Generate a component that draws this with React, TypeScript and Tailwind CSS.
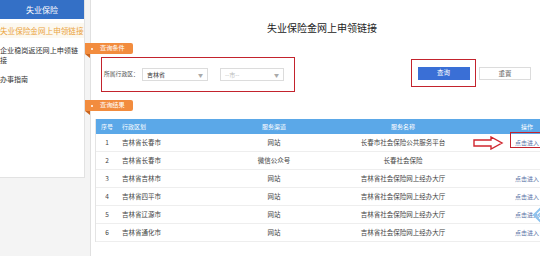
import React from 'react';

const rows = [
  { no: '1', area: '吉林省长春市', ch: '网站', name: '长春市社会保险公共服务平台', link: true },
  { no: '2', area: '吉林省长春市', ch: '微信公众号', name: '长春社会保险', link: false },
  { no: '3', area: '吉林省吉林市', ch: '网站', name: '吉林省社会保险网上经办大厅', link: true },
  { no: '4', area: '吉林省四平市', ch: '网站', name: '吉林省社会保险网上经办大厅', link: true },
  { no: '5', area: '吉林省辽源市', ch: '网站', name: '吉林省社会保险网上经办大厅', link: true },
  { no: '6', area: '吉林省通化市', ch: '网站', name: '吉林省社会保险网上经办大厅', link: true },
];

const Tag: React.FC<{ label: string }> = ({ label }) => (
  <div className="relative -ml-[6px] flex h-[11px] w-[48px] items-center rounded-r-[2px] bg-[#f28c3e]">
    <span className="ml-[6px] h-[2px] w-[2px] rounded-full bg-white" />
    <span className="ml-[7px] text-[6.2px] leading-none text-white">{label}</span>
    <span className="absolute left-0 top-full h-0 w-0 border-l-[5px] border-t-[4px] border-l-transparent border-t-[#c8651f]" />
  </div>
);

const App: React.FC = () => {
  return (
    <div
      className="flex h-[256px] w-[553px] overflow-hidden bg-[#f4f4f4] text-[#333]"
      style={{ fontFamily: '"Noto Sans CJK SC", "Noto Sans", sans-serif' }}
    >
      {/* Sidebar */}
      <div className="w-[85px] shrink-0">
        <div className="h-[178px] overflow-hidden border-b border-r border-[#e2e2e2] bg-white">
          <div className="flex h-[19px] items-center justify-center bg-[#3470c6] text-[8px] text-white">失业保险</div>
          <div className="mt-[4px] flex h-[15px] items-center bg-[#fcf8ef]">
            <span className="whitespace-nowrap text-[7.6px] leading-none text-[#eba43f]">失业保险金网上申领链接</span>
          </div>
          <div className="mt-[7px] text-[7.1px] leading-[10px] text-[#333]">
            企业稳岗返还网上申领链
            <br />
            接
          </div>
          <div className="mt-[9px] text-[7px] leading-[10px] text-[#333]">办事指南</div>
        </div>
      </div>

      {/* Main */}
      <div className="relative ml-[5px] flex-1 border-l border-[#e0e0e0] bg-white">
        <div className="pt-[22px] text-center text-[10px] leading-[12px] text-[#222]">失业保险金网上申领链接</div>

        <div className="mt-[9px]">
          <Tag label="查询条件" />
        </div>

        <div className="mt-[3px] flex items-start">
          <div className="ml-[10px] flex h-[35px] w-[194px] items-center border-[1.5px] border-[#c3232d] pl-[2px]">
            <span className="w-[38px] text-[5.8px] text-[#555]">所属行政区：</span>
            <div className="flex h-[13px] w-[66px] items-center justify-between border border-[#dcdcdc] px-[4px] text-[6px]">
              <span className="text-[#333]">吉林省</span>
              <span className="text-[5px] text-[#aaa]">▼</span>
            </div>
            <div className="ml-[12px] flex h-[13px] w-[64px] items-center justify-between border border-[#dcdcdc] px-[4px] text-[6px]">
              <span className="text-[#bbb]">--市--</span>
              <span className="text-[5px] text-[#aaa]">▼</span>
            </div>
          </div>
          <div className="ml-[116px] mt-[2px] flex h-[28px] w-[65px] items-center justify-center border-[1.5px] border-[#c3232d]">
            <div className="flex h-[13px] w-[52px] items-center justify-center bg-[#3a6fd6] text-[6.5px] text-white">查询</div>
          </div>
          <div className="ml-[3px] mt-[10px] flex h-[13px] w-[52px] items-center justify-center border border-[#dcdcdc] text-[6.5px] text-[#666]">重置</div>
        </div>

        <div className="mt-[8px]">
          <Tag label="查询结果" />
        </div>

        {/* Table */}
        <div className="ml-[4px] mt-[8px] w-[445px] border-l border-[#e4e4e4] text-[6.5px]">
          <div className="grid h-[15px] grid-cols-[22px_100px_112px_146px_65px] items-center bg-[#5ba8e8] text-[6px] text-white">
            <span className="text-center">序号</span>
            <span className="pl-[4px]">行政区划</span>
            <span className="text-center">服务渠道</span>
            <span className="text-center">服务名称</span>
            <span className="pl-[37px] text-center">操作</span>
          </div>
          {rows.map((r) => (
            <div
              key={r.no}
              className="grid h-[18px] grid-cols-[22px_100px_112px_146px_65px] items-center border-b border-[#eeeeee] text-[#444]"
            >
              <span className="text-center">{r.no}</span>
              <span className="pl-[4px]">{r.area}</span>
              <span className="text-center">{r.ch}</span>
              <span className="text-center">{r.name}</span>
              <span className="pl-[37px] text-center text-[6px] text-[#5a73a6]">{r.link ? '点击进入' : ''}</span>
            </div>
          ))}
        </div>

        {/* Annotations */}
        <svg className="absolute left-[382px] top-[136px]" width="31" height="14" viewBox="0 0 31 14">
          <path d="M1 4 H18 V1 L29 7 L18 13 V10 H1 Z" fill="none" stroke="#d0262e" strokeWidth="1.4" strokeLinejoin="miter" />
        </svg>
        <div className="absolute left-[419px] top-[132px] h-[16px] w-[32px] border-[1.5px] border-[#c3232d]" />
        <svg className="absolute left-[441px] top-[207px]" width="11" height="16" viewBox="0 0 11 16">
          <path d="M9 1 L2 8 L9 15" fill="none" stroke="#8cc3ef" strokeWidth="2" />
          <path d="M11 4 L6 8 L11 12" fill="none" stroke="#8cc3ef" strokeWidth="1.5" />
        </svg>
        <div className="absolute right-0 top-0 h-full w-[13px] bg-white" />
      </div>
    </div>
  );
};

export default App;
